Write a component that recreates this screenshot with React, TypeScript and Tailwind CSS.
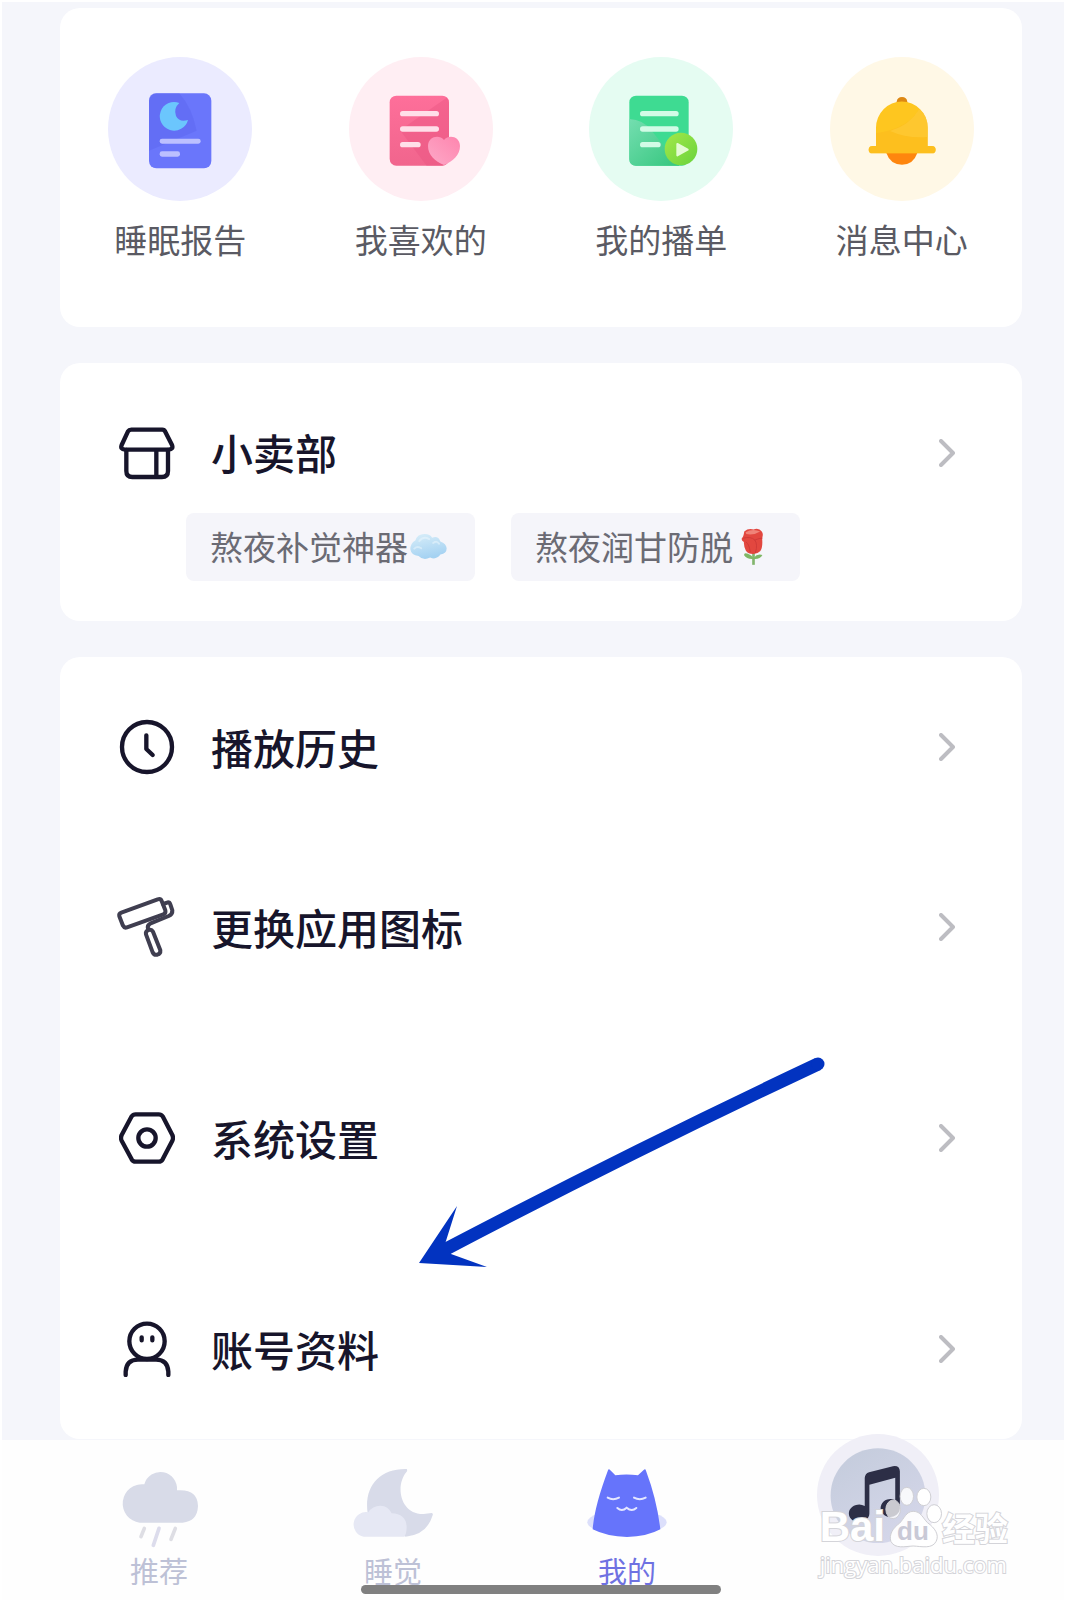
import React from "react";

const INK = "#17152b";

function ReportIcon() {
  return (
    <svg viewBox="54 49 432 432" className="size-36" aria-hidden="true">
      <circle cx="270" cy="265" r="216" fill="#ebebff" />
      <rect x="177" y="158" width="187" height="225" rx="22" fill="#6a76fb" />
      <path d="M199 158H268Q306 200 320 270L177 330V180Q177 158 199 158Z" fill="#5b63ee" opacity=".4" />
      <path d="M268 187A43 43 0 1 0 294 238Q268 246 258 226Q250 203 268 187Z" fill="#6bc6fd" />
      <rect x="209" y="294" width="123" height="15" rx="7" fill="#bcc0ff" />
      <rect x="209" y="332" width="61" height="16" rx="7" fill="#bcc0ff" />
    </svg>
  );
}

function FavoriteIcon() {
  return (
    <svg viewBox="777 50 432 432" className="size-36" aria-hidden="true">
      <defs>
        <linearGradient id="favSheet" x1="0" y1="0" x2="0" y2="1">
          <stop offset="0" stopColor="#fe6f9a" />
          <stop offset="1" stopColor="#f1658d" />
        </linearGradient>
        <linearGradient id="favHeart" x1="0" y1="1" x2="1" y2="0">
          <stop offset="0" stopColor="#fda9c8" />
          <stop offset="1" stopColor="#fe85ae" />
        </linearGradient>
      </defs>
      <circle cx="993" cy="266" r="216" fill="#ffeef3" />
      <rect x="899" y="166" width="178" height="210" rx="20" fill="url(#favSheet)" />
      <path d="M1070 172Q1077 178 1077 188V290L1060 376H1010L930 270Z" fill="#e9527f" opacity=".4" />
      <g fill="#ffdfe9">
        <rect x="930" y="212" width="117" height="16" rx="8" />
        <rect x="930" y="258" width="117" height="16" rx="8" />
        <rect x="930" y="305" width="62" height="16" rx="8" />
      </g>
      <path d="M1062 374C1035 364 1014 343 1014 317C1014 288 1048 281 1062 299C1076 281 1110 288 1110 317C1110 343 1089 364 1062 374Z" fill="url(#favHeart)" />
    </svg>
  );
}

function PlaylistIcon() {
  return (
    <svg viewBox="59 50 432 432" className="size-36" aria-hidden="true">
      <defs>
        <linearGradient id="playBadge" x1="0" y1="0" x2="1" y2="1">
          <stop offset="0" stopColor="#a4e84a" />
          <stop offset="1" stopColor="#69d33c" />
        </linearGradient>
        <linearGradient id="playCurve" x1="0" y1="0" x2="1" y2="1">
          <stop offset="0" stopColor="#74deb0" />
          <stop offset="1" stopColor="#35c67e" />
        </linearGradient>
      </defs>
      <circle cx="275" cy="266" r="216" fill="#e5fcf2" />
      <rect x="180" y="166" width="178" height="210" rx="20" fill="#3edb92" />
      <path d="M180 236Q222 238 246 270L330 376H200Q180 376 180 356Z" fill="url(#playCurve)" />
      <g fill="#d2fbe6">
        <rect x="212" y="212" width="116" height="16" rx="8" />
        <rect x="212" y="258" width="116" height="16" rx="8" />
        <rect x="212" y="305" width="62" height="16" rx="8" />
      </g>
      <circle cx="335" cy="326" r="49" fill="url(#playBadge)" />
      <path d="M324 311L355 328L324 345Z" fill="#e4fbd4" stroke="#e4fbd4" strokeWidth="6" strokeLinejoin="round" />
    </svg>
  );
}

function BellIcon() {
  return (
    <svg viewBox="780 50 432 432" className="size-36" aria-hidden="true">
      <circle cx="996" cy="266" r="216" fill="#fff8e6" />
      <path d="M980 190V184Q982 170 996 170Q1010 170 1012 184V190Z" fill="#dd8813" />
      <path d="M949 338H1042Q1030 373 996 373Q961 373 949 338Z" fill="#fe860e" />
      <path d="M918 320V262A77 78 0 0 1 1073 262V317H1086Q1097 318 1097 328Q1097 339 1086 339H907Q896 339 896 328Q896 318 907 317H918Z" fill="#fec61f" />
      <path d="M1048 206Q1073 226 1073 262V317H1086Q1097 318 1097 328Q1097 339 1086 339H907Q896 339 896 328Q896 318 907 317H918V278Q1010 268 1048 206Z" fill="#fbbb1e" opacity=".6" />
      <path d="M1048 206Q1073 226 1073 262V290Q1010 295 960 272Q1020 254 1048 206Z" fill="#ffcf3f" opacity=".5" />
    </svg>
  );
}

function ShopIcon() {
  return (
    <svg viewBox="57 48 168 168" className="size-14" fill="none" stroke={INK} strokeWidth="13" strokeLinejoin="round" strokeLinecap="round" aria-hidden="true">
      <path d="M94 62H187Q193 62 195 67L216 108Q221 121 206 122H75Q60 121 65 108L84 67Q87 62 94 62Z" />
      <path d="M79 123V186Q79 204 97 204H186Q204 204 204 186V123M169 124V203" />
    </svg>
  );
}

function ClockIcon() {
  return (
    <svg viewBox="57 61 168 168" className="size-14" fill="none" stroke={INK} strokeWidth="13" strokeLinejoin="round" strokeLinecap="round" aria-hidden="true">
      <circle cx="141" cy="145" r="75" />
      <path d="M139 110V151L158 169" />
    </svg>
  );
}

function RollerIcon() {
  return (
    <svg viewBox="57 600 168 168" className="size-14 overflow-visible" fill="none" stroke="#3f3e50" strokeWidth="12" strokeLinejoin="round" strokeLinecap="round" aria-hidden="true">
      <path d="M64 641L173 601Q182 598 185 606L196 634Q198 643 190 646L81 685Q73 688 69 680L58 652Q56 644 64 641Z" />
      <path d="M189 615L204 610Q209 610 211 616L217 634Q218 645 206 651L150 674Q141 679 144 690" />
      <path d="M144 694Q154 689 159 698L181 754Q182 764 172 767Q162 769 158 760L138 706Q136 697 144 694Z" />
    </svg>
  );
}

function SettingsIcon() {
  return (
    <svg viewBox="57 64 168 168" className="size-14" fill="none" stroke={INK} strokeWidth="13" strokeLinejoin="round" aria-hidden="true">
      <path d="M107 77H176Q184 77 188 83L217 139Q221 148 217 156L188 212Q184 219 176 219H107Q99 219 95 212L65 156Q61 148 65 139L95 83Q99 77 107 77Z" />
      <circle cx="141" cy="148" r="26" />
    </svg>
  );
}

function PersonIcon() {
  return (
    <svg viewBox="57 696 168 168" className="size-14" fill="none" stroke={INK} strokeWidth="13" strokeLinecap="round" aria-hidden="true">
      <circle cx="141" cy="757" r="53" />
      <path d="M77 858V848Q79 812 114 812H168Q203 812 205 848V858" />
      <path d="M125 745V754M157 745V754" />
    </svg>
  );
}

function Chevron() {
  return (
    <svg viewBox="0 0 16 28" className="h-7 w-4 shrink-0" fill="none" stroke="#bdbdc2" strokeWidth="4" strokeLinecap="round" strokeLinejoin="round" aria-hidden="true">
      <path d="M2 2L14 14L2 26" />
    </svg>
  );
}

function CloudEmoji() {
  return (
    <svg viewBox="932 378 112 84" className="ml-0.5 h-7 w-[37px]" role="img" aria-label="云">
      <defs>
        <linearGradient id="cloudFill" x1="0" y1="0" x2="0.3" y2="1">
          <stop offset="0" stopColor="#d9eef9" />
          <stop offset="1" stopColor="#a5d2f2" />
        </linearGradient>
      </defs>
      <path d="M948 400Q955 381 975 381Q992 380 999 392Q1017 385 1024 403Q1042 409 1043 424Q1043 440 1024 443Q1012 460 993 452Q972 462 958 447Q936 446 933 427Q933 408 948 400Z" fill="url(#cloudFill)" />
      <path d="M960 402Q972 386 990 396M1002 408Q1014 400 1020 410M945 425Q955 415 966 424" fill="none" stroke="#edf8fd" strokeWidth="6" strokeLinecap="round" opacity=".5" />
    </svg>
  );
}

function RoseEmoji() {
  return (
    <svg viewBox="682 362 112 114" className="ml-0.5 h-[38px] w-[37px]" role="img" aria-label="玫瑰">
      <path d="M734 432H742V473H734Z" fill="#82b56d" />
      <path d="M712 438Q726 438 738 452Q750 438 765 443Q758 457 738 455Q718 457 709 443Z" fill="#7eb765" />
      <path d="M710 372Q722 362 738 366Q754 360 763 372Q769 380 764 392Q767 420 758 432Q749 441 736 440Q722 440 715 430Q708 416 709 404Q700 399 703 392Q708 388 710 372Z" fill="#e2473f" />
      <path d="M714 374Q736 362 758 372Q740 384 716 380Z" fill="#f08378" />
      <path d="M708 392Q730 386 742 398Q756 392 764 392M716 404Q726 412 728 434M742 398Q752 410 744 436" fill="none" stroke="#cf3a38" strokeWidth="3" strokeLinecap="round" />
    </svg>
  );
}

function RainIcon() {
  return (
    <svg viewBox="181 138 240 246" className="h-[82px] w-20" aria-hidden="true">
      <path d="M243 308A57 57 0 1 1 257 193A50 50 0 0 1 355 211Q417 206 418 258Q416 304 372 308Z" fill="#d8dbe8" />
      <g fill="none" strokeWidth="11" strokeLinecap="round">
        <path d="M257 325L247 350M350 325L337 358" stroke="#dedee4" />
        <path d="M301 325L284 376" stroke="#dcdcec" />
      </g>
    </svg>
  );
}

function SleepIcon() {
  return (
    <svg viewBox="886 138 240 246" className="h-[82px] w-20" aria-hidden="true">
      <path d="M1047 147Q1050 150 1047 155C1012 195 1026 284 1098 282L1122 279Q1127 280 1125 286Q1108 344 1044 350L930 280C918 200 965 145 1047 147Z" fill="#d8dbe9" />
      <path d="M918 350A36 36 0 1 1 932 277Q944 257 968 257Q992 258 1002 280Q1046 282 1047 322Q1047 340 1040 350Z" fill="#e6e8f4" />
    </svg>
  );
}

function CatIcon() {
  return (
    <svg viewBox="90 138 240 246" className="h-[82px] w-20" aria-hidden="true">
      <ellipse cx="210" cy="307" rx="119" ry="37" fill="#dcdffb" />
      <path d="M153 151Q155 145 160 151L175 166Q208 161 243 166L260 150Q265 145 267 152Q300 240 310 328Q270 350 210 351Q150 350 107 328Q112 260 153 151Z" fill="#6674fb" />
      <path d="M152 233Q168 242 186 233M231 233Q248 242 266 233M181 264Q195 276 209 263Q224 276 238 264" fill="none" stroke="#e4e7ff" strokeWidth="6" strokeLinecap="round" strokeLinejoin="round" />
    </svg>
  );
}

function MusicIcon() {
  return (
    <svg viewBox="777 38 368 368" className="size-[122px]" aria-hidden="true">
      <defs>
        <linearGradient id="musicDisc" x1="0" y1="0" x2="0.6" y2="1">
          <stop offset="0" stopColor="#c3cbdb" />
          <stop offset="1" stopColor="#d4d6e9" />
        </linearGradient>
      </defs>
      <circle cx="961" cy="222" r="184" fill="#f0eff7" />
      <circle cx="961" cy="224" r="143" fill="url(#musicDisc)" />
      <path d="M921 170Q922 157 934 153L1006 135Q1026 132 1027 150V262A29 27 0 1 1 1013 238V170L935 191V277A31 27 0 1 1 921 255Z" fill="#2c2e46" />
    </svg>
  );
}

function Paw() {
  return (
    <svg viewBox="966 196 176 186" className="-mx-px h-[62px] w-[59px]" fill="#ffffff" stroke="#cfcfd4" strokeWidth="3" aria-hidden="true">
      <ellipse cx="993" cy="266" rx="22" ry="28" fillOpacity=".75" />
      <ellipse cx="1034" cy="227" rx="20" ry="27" fillOpacity=".85" />
      <ellipse cx="1085" cy="229" rx="21" ry="26" />
      <ellipse cx="1116" cy="279" rx="22" ry="27" />
      <path d="M1053 272C1076 272 1082 292 1096 306C1118 322 1132 342 1122 362C1110 386 1078 377 1053 376C1030 377 998 386 986 362C980 342 992 322 1012 308C1026 294 1032 272 1053 272Z" fillOpacity=".92" />
    </svg>
  );
}

const shortcuts = [
  { label: "睡眠报告", icon: <ReportIcon /> },
  { label: "我喜欢的", icon: <FavoriteIcon /> },
  { label: "我的播单", icon: <PlaylistIcon /> },
  { label: "消息中心", icon: <BellIcon /> },
];

const rowGroups = [
  [
    { label: "播放历史", icon: <ClockIcon /> },
    { label: "更换应用图标", icon: <RollerIcon /> },
  ],
  [{ label: "系统设置", icon: <SettingsIcon /> }],
  [{ label: "账号资料", icon: <PersonIcon /> }],
];

const tabs = [
  { label: "推荐", icon: <RainIcon />, active: false },
  { label: "睡觉", icon: <SleepIcon />, active: false },
  { label: "我的", icon: <CatIcon />, active: true },
];

const watermarkText = "text-white [-webkit-text-stroke:2px_#d4d4d9] [paint-order:stroke_fill]";

export default function App() {
  return (
    <div className="relative flex min-h-screen flex-col border-2 border-b-0 border-white bg-[#f5f6fb] font-['Noto_Sans_CJK_SC',sans-serif] text-[#17152b]">
      <main className="flex flex-1 flex-col gap-9 pt-1.5 pr-[42px] pl-[58px]">
        <section className="grid grid-cols-4 rounded-[20px] bg-white pt-[49px] pb-16">
          {shortcuts.map((s) => (
            <button key={s.label} type="button" className="flex flex-col items-center gap-3.5">
              {s.icon}
              <span className="text-[33px] leading-12 text-[#5a5a63]">{s.label}</span>
            </button>
          ))}
        </section>

        <section className="rounded-[20px] bg-white pt-[58px] pb-10">
          <button type="button" className="flex w-full items-center gap-9 pr-[67px] pl-[59px] text-left">
            <ShopIcon />
            <span className="flex-1 pb-0.5 text-[42px] leading-[62px] font-medium">小卖部</span>
            <Chevron />
          </button>
          <div className="mt-7 flex gap-9 pl-[126px]">
            <a href="#nap" className="flex h-[68px] items-center rounded-lg bg-[#f5f5fa] pr-7 pl-6 text-[33px] text-[#6b6b74]">
              熬夜补觉神器
              <CloudEmoji />
            </a>
            <a href="#hair" className="flex h-[68px] items-center rounded-lg bg-[#f5f5fa] pr-7 pl-6 text-[33px] text-[#6b6b74]">
              熬夜润甘防脱
              <RoseEmoji />
            </a>
          </div>
        </section>

        <section className="relative flex flex-col gap-[31px] rounded-[20px] bg-white">
          {rowGroups.map((group) => (
            <div key={group[0].label}>
              {group.map((row) => (
                <button key={row.label} type="button" className="flex h-[180px] w-full items-center gap-9 pr-[67px] pl-[59px] text-left">
                  {row.icon}
                  <span className="flex-1 text-[42px] leading-[62px] font-medium">{row.label}</span>
                  <Chevron />
                </button>
              ))}
            </div>
          ))}
          <svg viewBox="418 1056 408 214" className="pointer-events-none absolute top-[398px] left-[358px] h-[214px] w-[408px]" aria-hidden="true">
            <path d="M446 1250Q631 1153 818 1065" fill="none" stroke="#0233c0" strokeWidth="13" />
            <circle cx="818" cy="1065" r="6.5" fill="#0233c0" />
            <path d="M419 1264L457 1207L445 1245L451 1255L487 1268Z" fill="#0233c0" />
          </svg>
        </section>
      </main>

      <nav className="relative flex h-40 items-start bg-[#fefefe] pr-[52px] pl-10">
        {tabs.map((t) => (
          <button key={t.label} type="button" className="flex w-[234px] flex-col items-center pt-[26px]">
            {t.icon}
            <span className={t.active ? "text-[29px] leading-[44px] text-[#6e71e2]" : "text-[29px] leading-[44px] text-[#bdc1d6]"}>{t.label}</span>
          </button>
        ))}
        <button type="button" aria-label="音乐" className="-mt-1.5 flex flex-1 justify-center">
          <MusicIcon />
        </button>
      </nav>

      <div className="pointer-events-none absolute inset-x-0 bottom-[6px] flex justify-center pr-[42px] pl-[58px]">
        <div className="h-[9px] w-[360px] rounded-full bg-[#808080]" />
      </div>

      <div className="pointer-events-none absolute right-14 bottom-5 flex flex-col items-start">
        <div className="flex items-end">
          <span className={`font-['Liberation_Sans',sans-serif] text-[42px] leading-[42px] font-bold ${watermarkText}`}>Bai</span>
          <span className="relative">
            <Paw />
            <span className="absolute bottom-0 left-3 font-['Liberation_Sans',sans-serif] text-[26px] leading-[34px] font-bold text-[#c9c9d6]">du</span>
          </span>
          <span className={`text-[33px] leading-[42px] font-bold ${watermarkText}`}>经验</span>
        </div>
        <span className={`font-['Open_Sans',sans-serif] text-[22px] leading-8 ${watermarkText}`}>jingyan.baidu.com</span>
      </div>
    </div>
  );
}
